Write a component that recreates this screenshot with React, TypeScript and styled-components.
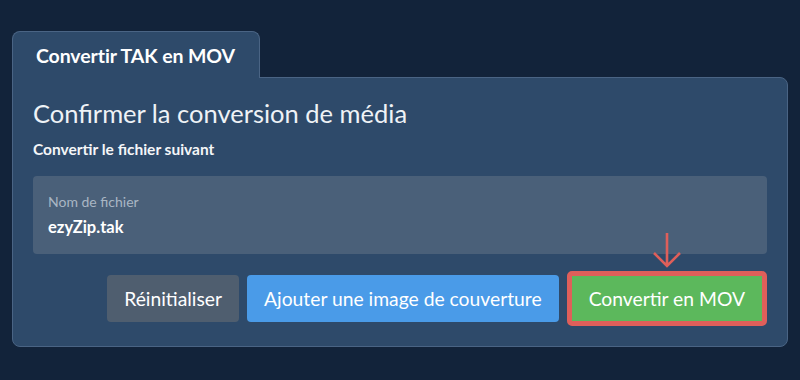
import styled, { createGlobalStyle } from 'styled-components';

const GlobalStyle = createGlobalStyle`
    html, body {
        margin: 0;
        padding: 0;
        background: #12233a;
        font-family: Lato, "Open Sans", sans-serif;
        color: #ffffff;
    }
`;

const Page = styled.div`
    width: 800px;
    height: 380px;
    box-sizing: border-box;
    padding: 31px 12px 0 12px;
`;

const Tab = styled.div`
    display: inline-block;
    box-sizing: border-box;
    width: 248px;
    height: 47px;
    padding: 11px 0 0 23px;
    background: #2e4a6a;
    border: 1px solid #4a6484;
    border-bottom: none;
    border-radius: 8px 8px 0 0;
    font-size: 19.5px;
    font-weight: 700;
    line-height: 26px;
    letter-spacing: -0.1px;
    position: relative;
    z-index: 1;
    margin-bottom: -1px;
`;

const Panel = styled.div`
    box-sizing: border-box;
    width: 776px;
    height: 270px;
    padding: 19px 20px 0 20px;
    background: #2e4a6a;
    border: 1px solid #4a6484;
    border-radius: 0 8px 8px 8px;
`;

const Title = styled.h2`
    margin: 0;
    font-size: 25.5px;
    font-weight: 400;
    line-height: 32px;
    color: #eef2f6;
`;

const Subtitle = styled.p`
    margin: 10px 0 0 0;
    font-size: 15.5px;
    font-weight: 700;
    line-height: 20px;
    color: #f4f6f8;
`;

const Field = styled.div`
    box-sizing: border-box;
    height: 78px;
    margin-top: 17px;
    padding: 17px 15px 0 15px;
    background: #4a6079;
    border-radius: 4px;
`;

const FieldLabel = styled.div`
    font-size: 14px;
    line-height: 18px;
    color: #a9b6c4;
`;

const FieldValue = styled.div`
    margin-top: 6px;
    font-size: 16.5px;
    font-weight: 700;
    line-height: 20px;
    color: #ffffff;
`;

const Actions = styled.div`
    display: flex;
    justify-content: flex-end;
    align-items: center;
    gap: 8px;
    margin-top: 17px;
`;

const Button = styled.button<{ $tone: 'grey' | 'blue' | 'green' }>`
    box-sizing: border-box;
    height: ${(p) => (p.$tone === 'green' ? '55px' : '47px')};
    padding: 0 17px;
    border: ${(p) => (p.$tone === 'green' ? '5px solid #df5f5a' : 'none')};
    border-radius: ${(p) => (p.$tone === 'green' ? '5px' : '4px')};
    background: ${(p) =>
        p.$tone === 'grey' ? '#4f5e6f' : p.$tone === 'blue' ? '#4a9be8' : '#5cb85c'};
    color: #ffffff;
    font-family: Lato, "Open Sans", sans-serif;
    font-size: 19.3px;
    font-weight: 400;
    line-height: 24px;
    white-space: nowrap;
    position: relative;
`;

const Arrow = styled.svg`
    position: absolute;
    left: 50%;
    top: -43px;
    margin-left: -14px;
    overflow: visible;
`;

const App = () => {
    return (
        <Page>
            <GlobalStyle />
            <Tab>Convertir TAK en MOV</Tab>
            <Panel>
                <Title>Confirmer la conversion de média</Title>
                <Subtitle>Convertir le fichier suivant</Subtitle>
                <Field>
                    <FieldLabel>Nom de fichier</FieldLabel>
                    <FieldValue>ezyZip.tak</FieldValue>
                </Field>
                <Actions>
                    <Button $tone='grey'>Réinitialiser</Button>
                    <Button $tone='blue'>Ajouter une image de couverture</Button>
                    <Button $tone='green'>
                        <Arrow width='28' height='36' viewBox='0 0 28 36'>
                            <path
                                d='M14 0 V33 M1 20 L14 33 L27 20'
                                fill='none'
                                stroke='#df5f5a'
                                strokeWidth='2.6'
                            />
                        </Arrow>
                        Convertir en MOV
                    </Button>
                </Actions>
            </Panel>
        </Page>
    );
};

export default App;
